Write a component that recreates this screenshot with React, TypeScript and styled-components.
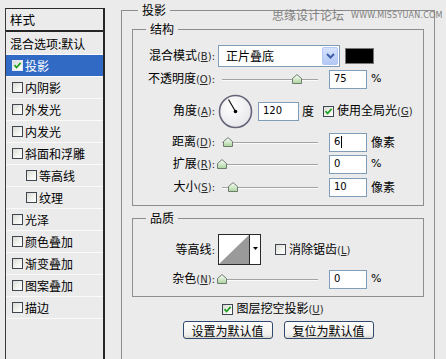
import React from "react";
import styled, { createGlobalStyle } from "styled-components";

const Global = createGlobalStyle`
  html, body { margin: 0; padding: 0; background: #ebebeb; }
  body {
    font-family: "Noto Sans CJK SC", "Noto Sans", sans-serif;
    font-size: 12px;
    line-height: 14px;
    color: #000;
  }
  * { box-sizing: border-box; }
`;

const Screen = styled.div`
  width: 446px;
  height: 359px;
  overflow: hidden;
  position: relative;
  display: flex;
  align-items: flex-start;
  padding: 3px 0 0 5px;
  background: #ebebeb;
`;

/* ---------- left style list ---------- */
const StylePanel = styled.div`
  flex: none;
  width: 100px;
  height: 400px;
  margin-top: 5px;
  border-left: 1px solid #3a3a3a;
  border-right: 2px solid #262626;
  border-top: 1px solid #2a2a2a;
  display: flex;
  flex-direction: column;
`;

const PanelHeader = styled.div`
  height: 23px;
  border-bottom: 2px solid #262626;
  padding-left: 4px;
  display: flex;
  align-items: center;
  font-size: 12.5px;
`;

const StyleList = styled.ul`
  list-style: none;
  margin: 0;
  padding: 1px 0 0;
`;

const StyleRow = styled.li<{ $selected?: boolean; $indent?: number; $plain?: boolean }>`
  height: 22px;
  display: flex;
  align-items: center;
  gap: 2px;
  padding-left: ${(p) => (p.$plain ? 4 : 6 + (p.$indent ?? 0) * 14)}px;
  border-bottom: 1px solid #fafafa;
  background: ${(p) => (p.$selected ? "#316ac5" : "transparent")};
  color: ${(p) => (p.$selected ? "#fff" : "#000")};
  white-space: nowrap;
`;

/* ---------- checkbox ---------- */
const Box = styled.span<{ $light?: boolean; $ml?: number }>`
  flex: none;
  width: 11px;
  height: 11px;
  margin-left: ${(p) => p.$ml ?? 0}px;
  display: inline-flex;
  align-items: center;
  justify-content: center;
  border: 1px solid ${(p) => (p.$light ? "#e4e9f4" : "#3f4650")};
  background: linear-gradient(135deg, #d9d9d5 0%, #f4f4f1 60%, #ffffff 100%);
`;

const CheckMark = () => (
  <svg width="9" height="9" viewBox="0 0 9 9">
    <polyline points="1.5,4.2 3.6,6.5 7.6,1.8" fill="none" stroke="#21a121" strokeWidth="1.8" />
  </svg>
);

const Check = ({ checked, light, ml }: { checked?: boolean; light?: boolean; ml?: number }) => (
  <Box $light={light} $ml={ml}>{checked && <CheckMark />}</Box>
);

/* ---------- right side group boxes ---------- */
const Outer = styled.fieldset`
  flex: none;
  width: 314px;
  height: 420px;
  margin: 0 0 0 16px;
  padding: 5px 10px 0;
  border: 1px solid #8e8e8e;
  min-inline-size: 0;
`;

const Legend = styled.legend<{ $ml: number }>`
  padding: 0 4px;
  margin-left: ${(p) => p.$ml}px;
  line-height: 14px;
  font-size: 12px;
`;

const Group = styled.fieldset<{ $pt: number; $pb: number; $mt?: number }>`
  margin: ${(p) => p.$mt ?? 0}px 0 0;
  padding: ${(p) => p.$pt}px 0 ${(p) => p.$pb}px;
  border: 1px solid #8e8e8e;
  min-inline-size: 0;
`;

const FormRow = styled.div<{ $h: number }>`
  display: grid;
  grid-template-columns: 85px 1fr;
  align-items: center;
  height: ${(p) => p.$h}px;
`;

const FieldLabel = styled.span`
  text-align: right;
  padding-right: 3px;
  white-space: nowrap;
`;

const Controls = styled.div`
  display: flex;
  align-items: center;
  white-space: nowrap;
`;

const Mn = styled.span`
  font-family: "DejaVu Sans", sans-serif;
  font-size: 10px;
  color: #2a2a2a;
  u { text-underline-offset: 1px; }
`;

const Select = styled.div`
  width: 122px;
  height: 22px;
  border: 1px solid #7f9db9;
  background: #fff;
  display: flex;
  align-items: center;
  padding: 0 1px 0 7px;
`;

const SelectBtn = styled.span`
  margin-left: auto;
  width: 16px;
  height: 18px;
  border: 1px solid #b5c8f3;
  border-radius: 2px;
  background: linear-gradient(#d6e2fd, #b4c8f5);
  display: flex;
  align-items: center;
  justify-content: center;
`;

const Swatch = styled.span`
  width: 29px;
  height: 16px;
  margin-left: 5px;
  background: #000;
  border: 1px solid #777;
`;

const SliderWrap = styled.div`
  position: relative;
  flex: none;
  width: 104px;
  height: 10px;
`;

const Track = styled.div`
  position: absolute;
  left: 4px;
  right: 4px;
  top: 5px;
  height: 1px;
  background: #a3a3a3;
  box-shadow: 0 1px 0 #fbfbfb;
`;

const ThumbSvg = styled.svg`
  position: absolute;
  top: 0;
`;

const Slider = ({ value }: { value: number }) => (
  <SliderWrap>
    <Track />
    <ThumbSvg width="10" height="10" viewBox="0 0 10 10" style={{ left: 4 + value * 96 - 5 }}>
      <defs>
        <linearGradient id="thumbG" x1="0" y1="0" x2="0" y2="1">
          <stop offset="0" stopColor="#ffffff" />
          <stop offset="1" stopColor="#a9d49c" />
        </linearGradient>
      </defs>
      <path d="M0.5 4.5 L5 0.6 L9.5 4.5 V9.5 H0.5 Z" fill="url(#thumbG)" stroke="#6e7c6e" strokeWidth="1" />
    </ThumbSvg>
  </SliderWrap>
);

const NumBox = styled.div<{ $w?: number; $ml?: number }>`
  flex: none;
  width: ${(p) => p.$w ?? 38}px;
  height: 19px;
  margin-left: ${(p) => p.$ml ?? 7}px;
  border: 1px solid #7f9db9;
  background: #fff;
  font-family: "DejaVu Sans", sans-serif;
  font-size: 10px;
  padding-left: 4px;
  display: flex;
  align-items: center;
`;

const Caret = styled.span`
  width: 1px;
  height: 12px;
  margin-left: 1px;
  background: #000;
`;

const Unit = styled.span<{ $latin?: boolean; $ml?: number }>`
  margin-left: ${(p) => p.$ml ?? 4}px;
  font-family: ${(p) => (p.$latin ? '"DejaVu Sans", sans-serif' : "inherit")};
  font-size: ${(p) => (p.$latin ? 11 : 12)}px;
`;

const CheckText = styled.span`
  margin-left: 3px;
`;

const DialSvg = styled.svg`
  flex: none;
`;

const Dial = () => (
  <DialSvg width="35" height="35" viewBox="0 0 35 35">
    <defs>
      <radialGradient id="dialG" cx="0.4" cy="0.35" r="0.7">
        <stop offset="0" stopColor="#ffffff" />
        <stop offset="1" stopColor="#e6e6ea" />
      </radialGradient>
    </defs>
    <circle cx="17.5" cy="17.5" r="16" fill="url(#dialG)" stroke="#65657a" strokeWidth="1.6" />
    <line x1="17.5" y1="17.5" x2="10.5" y2="5.5" stroke="#111" strokeWidth="1.2" />
    <circle cx="17.5" cy="17.5" r="1.8" fill="#000" />
  </DialSvg>
);

const Contour = styled.div`
  display: flex;
  height: 31px;
  border: 1px solid #2a2a2a;
  background: #fff;
`;

const ContourArrow = styled.span`
  width: 11px;
  border-left: 1px solid #2a2a2a;
  display: flex;
  align-items: center;
  justify-content: center;
  padding-bottom: 2px;
`;

const CheckRow = styled.div`
  display: flex;
  align-items: center;
  justify-content: center;
  height: 14px;
  margin-top: 5px;
  padding-right: 10px;
`;

const ButtonRow = styled.div`
  display: flex;
  justify-content: center;
  gap: 11px;
  margin-top: 5px;
`;

const Btn = styled.button`
  width: 90px;
  height: 18px;
  padding: 0;
  border: 1px solid #2f4a6c;
  border-radius: 3px;
  background: linear-gradient(#ffffff, #f0efec 80%, #d9d6cf);
  font-family: "Noto Sans CJK SC", sans-serif;
  font-size: 12px;
  line-height: 15px;
  color: #000;
`;

const Watermark = styled.div`
  position: absolute;
  top: 7px;
  left: 272px;
  display: flex;
  align-items: center;
  gap: 7px;
  color: #808080;
`;

const WmCn = styled.span`
  font-size: 12px;
  line-height: 16px;
`;

const WmEn = styled.span`
  font-family: "DejaVu Sans", sans-serif;
  font-size: 8px;
  letter-spacing: 0.2px;
  padding-top: 2px;
`;

const styleItems: { label: string; plain?: boolean; checked?: boolean; selected?: boolean; indent?: number }[] = [
  { label: "混合选项:默认", plain: true },
  { label: "投影", checked: true, selected: true },
  { label: "内阴影" },
  { label: "外发光" },
  { label: "内发光" },
  { label: "斜面和浮雕" },
  { label: "等高线", indent: 1 },
  { label: "纹理", indent: 1 },
  { label: "光泽" },
  { label: "颜色叠加" },
  { label: "渐变叠加" },
  { label: "图案叠加" },
  { label: "描边" },
];

const Label = ({ text, key: _k, m }: { text: string; key?: string; m?: string }) => (
  <FieldLabel>
    {text}
    {m && (
      <Mn>
        (<u>{m}</u>)
      </Mn>
    )}
    <Mn>:</Mn>
  </FieldLabel>
);

export default function App() {
  return (
    <>
      <Global />
      <Screen>
        <StylePanel>
          <PanelHeader>样式</PanelHeader>
          <StyleList>
            {styleItems.map((it) => (
              <StyleRow key={it.label} $selected={it.selected} $indent={it.indent} $plain={it.plain}>
                {!it.plain && <Check checked={it.checked} light={it.selected} />}
                <span>{it.label}</span>
              </StyleRow>
            ))}
          </StyleList>
        </StylePanel>

        <Outer>
          <Legend $ml={6}>投影</Legend>
          <Group $pt={8} $pb={6}>
            <Legend $ml={13}>结构</Legend>
            <FormRow $h={23}>
              <Label text="混合模式" m="B" />
              <Controls>
                <Select>
                  正片叠底
                  <SelectBtn>
                    <svg width="9" height="6" viewBox="0 0 9 6">
                      <polyline points="1,1 4.5,4.5 8,1" fill="none" stroke="#3d5ea8" strokeWidth="2" />
                    </svg>
                  </SelectBtn>
                </Select>
                <Swatch />
              </Controls>
            </FormRow>
            <FormRow $h={24}>
              <Label text="不透明度" m="O" />
              <Controls>
                <Slider value={0.78} />
                <NumBox>75</NumBox>
                <Unit $latin>%</Unit>
              </Controls>
            </FormRow>
            <FormRow $h={40}>
              <Label text="角度" m="A" />
              <Controls>
                <Dial />
                <NumBox $w={41} $ml={5}>120</NumBox>
                <Unit $ml={3}>度</Unit>
                <Check checked ml={9} />
                <CheckText>
                  使用全局光
                  <Mn>
                    (<u>G</u>)
                  </Mn>
                </CheckText>
              </Controls>
            </FormRow>
            <FormRow $h={22}>
              <Label text="距离" m="D" />
              <Controls>
                <Slider value={0.062} />
                <NumBox>
                  6<Caret />
                </NumBox>
                <Unit>像素</Unit>
              </Controls>
            </FormRow>
            <FormRow $h={22}>
              <Label text="扩展" m="R" />
              <Controls>
                <Slider value={0} />
                <NumBox>0</NumBox>
                <Unit $latin>%</Unit>
              </Controls>
            </FormRow>
            <FormRow $h={24}>
              <Label text="大小" m="S" />
              <Controls>
                <Slider value={0.115} />
                <NumBox>10</NumBox>
                <Unit>像素</Unit>
              </Controls>
            </FormRow>
          </Group>

          <Group $pt={8} $pb={4} $mt={5}>
            <Legend $ml={13}>品质</Legend>
            <FormRow $h={33}>
              <Label text="等高线" />
              <Controls>
                <Contour>
                  <svg width="30" height="29" viewBox="0 0 30 29">
                    <polygon points="0,29 30,0 30,29" fill="#9a9a9a" />
                  </svg>
                  <ContourArrow>
                    <svg width="5" height="3" viewBox="0 0 5 3">
                      <polygon points="0,0 5,0 2.5,3" fill="#000" />
                    </svg>
                  </ContourArrow>
                </Contour>
                <Check ml={14} />
                <CheckText>
                  消除锯齿
                  <Mn>
                    (<u>L</u>)
                  </Mn>
                </CheckText>
              </Controls>
            </FormRow>
            <FormRow $h={26}>
              <Label text="杂色" m="N" />
              <Controls>
                <Slider value={0} />
                <NumBox>0</NumBox>
                <Unit $latin>%</Unit>
              </Controls>
            </FormRow>
          </Group>

          <CheckRow>
            <Check checked />
            <CheckText>
              图层挖空投影
              <Mn>
                (<u>U</u>)
              </Mn>
            </CheckText>
          </CheckRow>
          <ButtonRow>
            <Btn>设置为默认值</Btn>
            <Btn>复位为默认值</Btn>
          </ButtonRow>
        </Outer>

        <Watermark>
          <WmCn>思缘设计论坛</WmCn>
          <WmEn>WWW.MISSYUAN.COM</WmEn>
        </Watermark>
      </Screen>
    </>
  );
}
